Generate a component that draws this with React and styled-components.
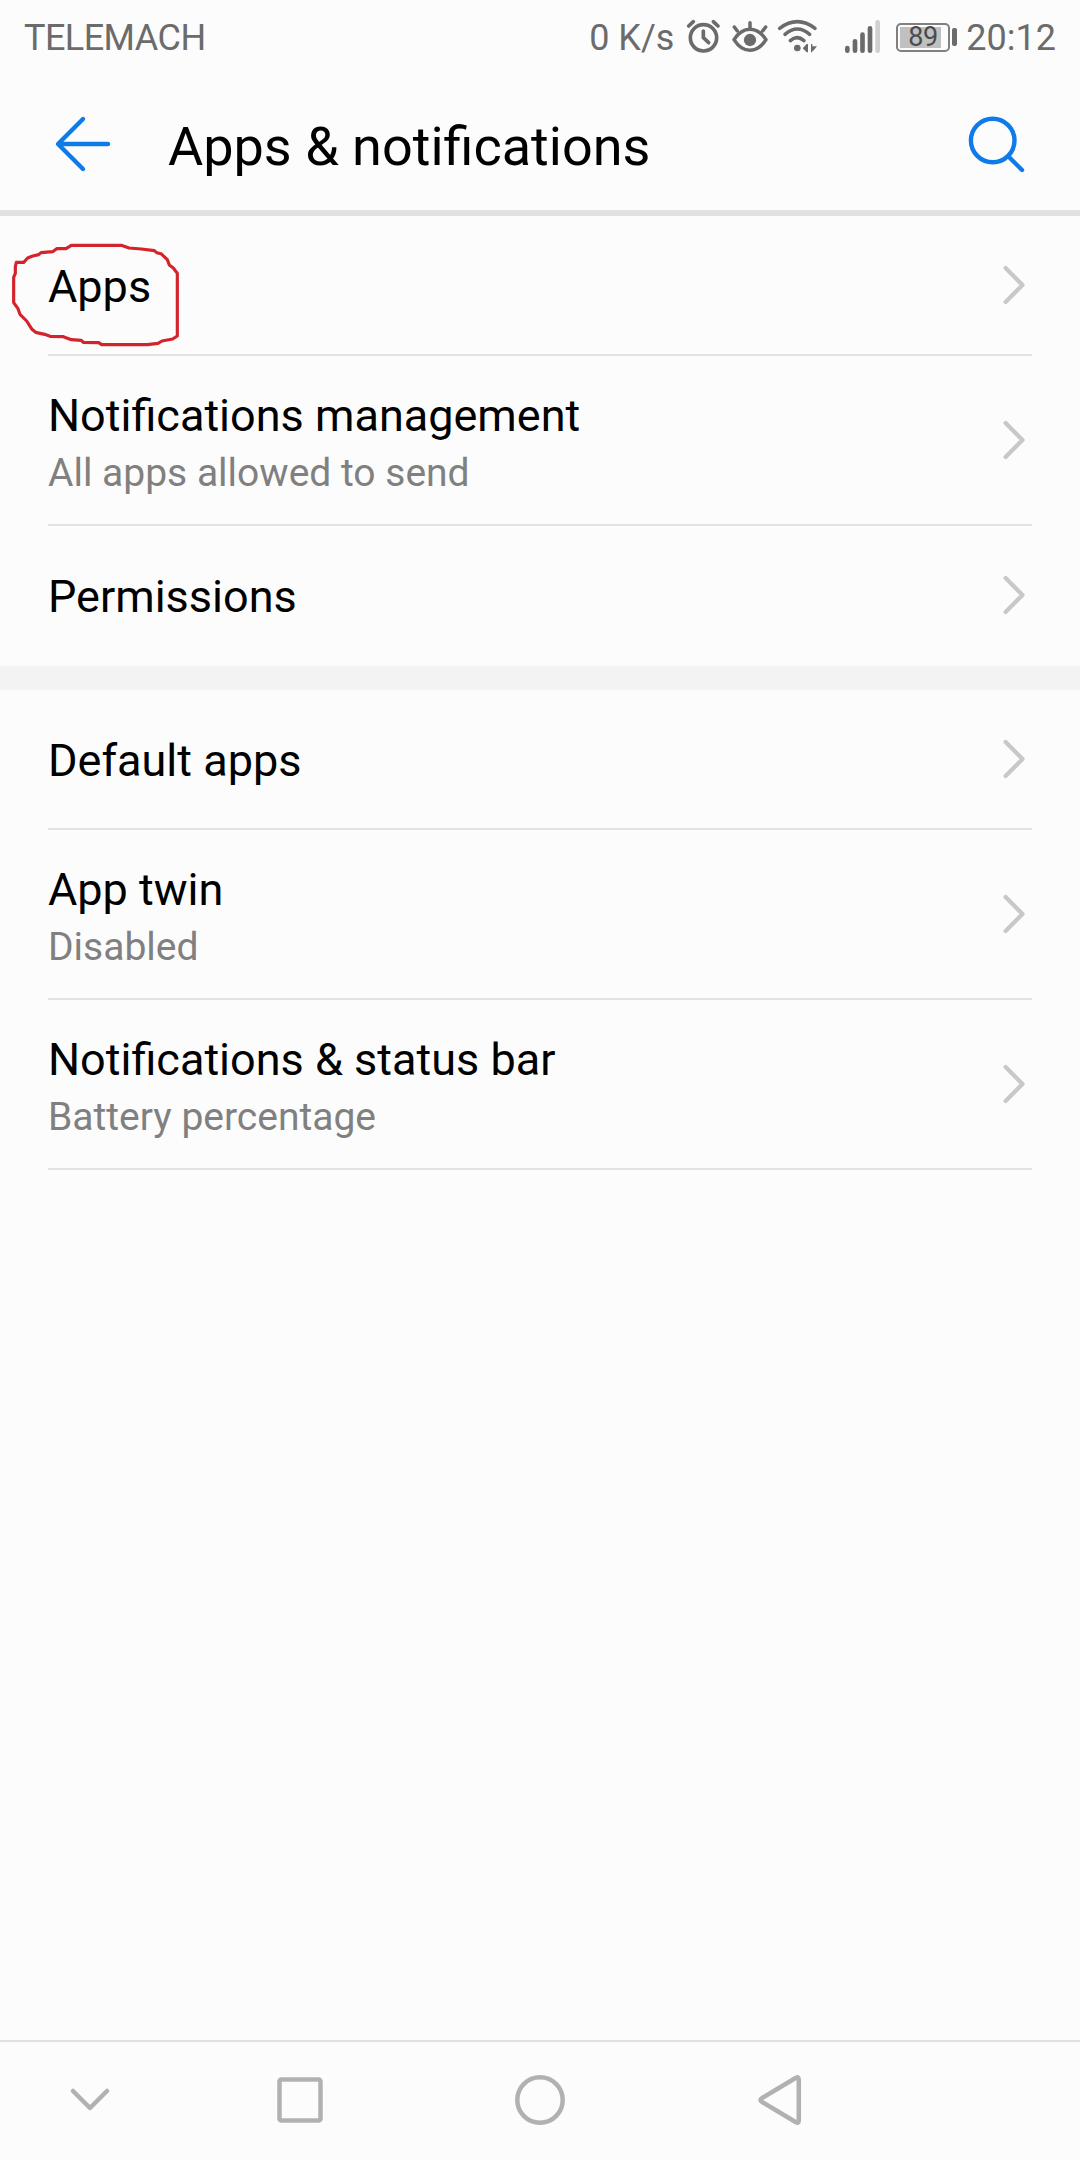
import React from 'react';
import styled, { createGlobalStyle } from 'styled-components';

const sections = [
  [
    { title: 'Apps', circled: true },
    { title: 'Notifications management', summary: 'All apps allowed to send' },
    { title: 'Permissions', last: true },
  ],
  [
    { title: 'Default apps' },
    { title: 'App twin', summary: 'Disabled' },
    { title: 'Notifications & status bar', summary: 'Battery percentage' },
  ],
];

const StatusIcons = () => (
  <>
    <Icon $w={33} $h={36} $ml={13} viewBox="351 57 99 108">
      <g fill="none" stroke="#6b6b6b" strokeWidth="11" strokeLinecap="round" strokeLinejoin="round">
        <circle cx="400.500" cy="113.500" r="39.500" />
        <path d="M356 78l14-13M444 78l-14-13M400 93v20l16 15" />
      </g>
    </Icon>
    <Icon $w={36} $h={36} $ml={12} viewBox="486 57 108 108">
      <g fill="none" stroke="#6b6b6b" strokeWidth="10.500" strokeLinecap="round" strokeLinejoin="round">
        <path d="M492 119q20-31 48-31t48 31q-20 32-48 32t-48-32z" />
        <path d="M540 68v18M493 81l9 12M587 81l-9 12" />
      </g>
      <circle cx="540" cy="120" r="18.500" fill="#6b6b6b" />
    </Icon>
    <Icon $w={40} $h={36} $ml={9} viewBox="621 57 120 108">
      <g fill="none" stroke="#6b6b6b" strokeWidth="10.500" strokeLinecap="round">
        <path d="M629 85q53-40 106 0M645 103q37-32 74 0M661 122q20-18 41 0" />
      </g>
      <circle cx="682" cy="144" r="10" fill="#6b6b6b" />
      <path d="M698 145l12-13h4v25h-4zM723 132h4v7h14l-11 13h-3v5h-4z" fill="#6b6b6b" />
    </Icon>
    <Icon $w={35} $h={36} $ml={28} viewBox="75 54 105 108">
      <g stroke="#6b6b6b" strokeWidth="14" strokeLinecap="round">
        <path d="M82 141v8M105 121v28M127.500 101v48M150 82v67" />
        <path d="M173 64v85" stroke="#d0d0d0" />
      </g>
    </Icon>
  </>
);

const App = () => {
  return (
    <>
      <GlobalStyle />
      <Screen>
        <StatusBar>
          <StatusText $spacing={-0.55}>TELEMACH</StatusText>
          <StatusRight>
            <StatusText>0 K/s</StatusText>
            <StatusIcons />
            <Battery>
              <BatteryBody>
                <BatteryLevel>89</BatteryLevel>
              </BatteryBody>
              <BatteryTip />
            </Battery>
            <StatusText>20:12</StatusText>
          </StatusRight>
        </StatusBar>
        <Header>
          <Icon $w={56} $h={56} viewBox="0 0 56 56">
            <path
              d="M28 3L3 28l25 25M4 28h49"
              fill="none"
              stroke="#0f7be8"
              strokeWidth="4.400"
              strokeLinecap="round"
              strokeLinejoin="round"
            />
          </Icon>
          <PageTitle>Apps & notifications</PageTitle>
          <Icon $w={57} $h={57} viewBox="0 0 57 57">
            <g fill="none" stroke="#0f7be8" strokeWidth="4.400" strokeLinecap="round">
              <circle cx="24.700" cy="24.500" r="21.800" />
              <path d="M41 41l13 13" />
            </g>
          </Icon>
        </Header>
        <Content>
          {sections.map((items, i) => (
            <Section key={i}>
              {items.map((item) => (
                <Row key={item.title} $tall={!!item.summary} $last={item.last}>
                  <RowText $tall={!!item.summary}>
                    <RowTitle>{item.title}</RowTitle>
                    {item.summary && <RowSummary>{item.summary}</RowSummary>}
                  </RowText>
                  <Icon $w={22} $h={40} viewBox="0 0 22 40">
                    <path
                      d="M1.600 3L18.500 20L1.600 37"
                      fill="none"
                      stroke="#c8c8c8"
                      strokeWidth="4.200"
                      strokeLinecap="round"
                      strokeLinejoin="round"
                    />
                  </Icon>
                  {item.circled && (
                    <RedMark viewBox="30 60 520 330">
                      <path d="M49 127H71L83 114L98 108L116 104L123 98L158 95L170 86L198 86L214 76H364L387 84L424 87L463 92L470 98L483 101L502 119L508 135L520 144L532 160V348L518 357L486 363L474 370L442 374H305L296 368L250 367L244 361L214 359L190 350L150 349L134 343L107 337L96 328L80 303L60 283L54 266L41 248V172L46 160L46 140Z" />
                    </RedMark>
                  )}
                </Row>
              ))}
            </Section>
          ))}
        </Content>
        <NavBar>
          <Icon $w={40} $h={50} viewBox="0 0 40 50">
            <path d="M3 16L20 33L37 16" />
          </Icon>
          <Icon $w={50} $h={50} viewBox="0 0 50 50">
            <rect x="4.500" y="4.500" width="41" height="41" rx="2" />
          </Icon>
          <Icon $w={50} $h={50} viewBox="0 0 50 50">
            <circle cx="25" cy="25" r="22.700" />
          </Icon>
          <Icon $w={50} $h={50} viewBox="0 0 50 50">
            <path d="M40 2.800Q42.800 1 42.800 5V45Q42.800 49 40 47.200L6 27Q3 25 6 23Z" />
          </Icon>
        </NavBar>
      </Screen>
    </>
  );
};

const GlobalStyle = createGlobalStyle`
  * {
    box-sizing: border-box;
  }
  body {
    margin: 0;
    background-color: #fcfcfc;
    font-family: Roboto, 'Liberation Sans', sans-serif;
  }
`;

const Screen = styled.div`
  width: 1080px;
  height: 2160px;
  display: flex;
  flex-direction: column;
  overflow: hidden;
  background-color: #fcfcfc;
`;

const Icon = styled.svg`
  width: ${({ $w }) => $w}px;
  height: ${({ $h }) => $h}px;
  margin-left: ${({ $ml }) => $ml || 0}px;
  flex-shrink: 0;
  display: block;
  overflow: visible;
`;

const StatusBar = styled.div`
  height: 74px;
  display: flex;
  justify-content: space-between;
  align-items: center;
  padding: 0 24px;
  font-size: 36px;
  color: #6b6b6b;
`;

const StatusText = styled.span`
  padding-top: 2px;
  letter-spacing: ${({ $spacing }) => $spacing || 0}px;
`;

const StatusRight = styled.div`
  display: flex;
  align-items: center;
`;

const Battery = styled.div`
  display: flex;
  align-items: center;
  gap: 2px;
  margin: 0 9px 0 16px;
`;

const BatteryBody = styled.div`
  width: 54px;
  height: 29px;
  padding: 2px;
  border: 2px solid #808080;
  border-radius: 5px;
`;

const BatteryLevel = styled.div`
  width: 41px;
  height: 21px;
  padding-left: 8px;
  background-color: #c0c0c0;
  color: #4c4c4c;
  font-size: 27px;
  line-height: 21px;
  letter-spacing: -0.5px;
`;

const BatteryTip = styled.div`
  width: 5px;
  height: 18px;
  border-radius: 2px;
  background-color: #6b6b6b;
`;

const Header = styled.header`
  height: 142px;
  display: flex;
  align-items: center;
  padding: 4px 55px 0;
  border-bottom: 6px solid #e1e1e1;
`;

const PageTitle = styled.h1`
  flex: 1;
  margin: 5px 0 0 57px;
  font-size: 54px;
  font-weight: 400;
  line-height: 64px;
  color: #000;
`;

const Content = styled.main`
  flex: 1;
`;

const Section = styled.section`
  & + & {
    border-top: 24px solid #f3f3f3;
  }
`;

const Row = styled.div`
  position: relative;
  height: ${({ $tall }) => ($tall ? 170 : 140)}px;
  margin: 0 48px;
  padding-right: 6px;
  display: flex;
  justify-content: space-between;
  align-items: center;
  border-bottom: 2px solid ${({ $last }) => ($last ? 'transparent' : '#e3e3e3')};
`;

const RowText = styled.div`
  display: flex;
  flex-direction: column;
  gap: 2px;
  padding-top: ${({ $tall }) => ($tall ? 8 : 4)}px;
`;

const RowTitle = styled.span`
  font-size: 45px;
  line-height: 56px;
  color: #000;
`;

const RowSummary = styled.span`
  font-size: 39px;
  line-height: 54px;
  color: #808080;
`;

/* hand-drawn mark over the row */
const RedMark = styled.svg`
  position: absolute;
  left: -38px;
  top: 24px;
  width: 173.330px;
  height: 110px;
  & path {
    fill: none;
    stroke: #d3242c;
    stroke-width: 9.500;
    stroke-linejoin: round;
  }
`;

const NavBar = styled.nav`
  height: 120px;
  display: flex;
  align-items: center;
  padding: 0 0 2px 70px;
  border-top: 2px solid #e1e1e1;
  & svg {
    fill: none;
    stroke: #b1b1b1;
    stroke-width: 4.500;
    stroke-linecap: round;
    stroke-linejoin: round;
  }
  & svg:nth-child(2) {
    margin-left: 165px;
  }
  & svg:nth-child(3) {
    margin-left: 190px;
  }
  & svg:nth-child(4) {
    margin-left: 191px;
  }
`;

export default App;
